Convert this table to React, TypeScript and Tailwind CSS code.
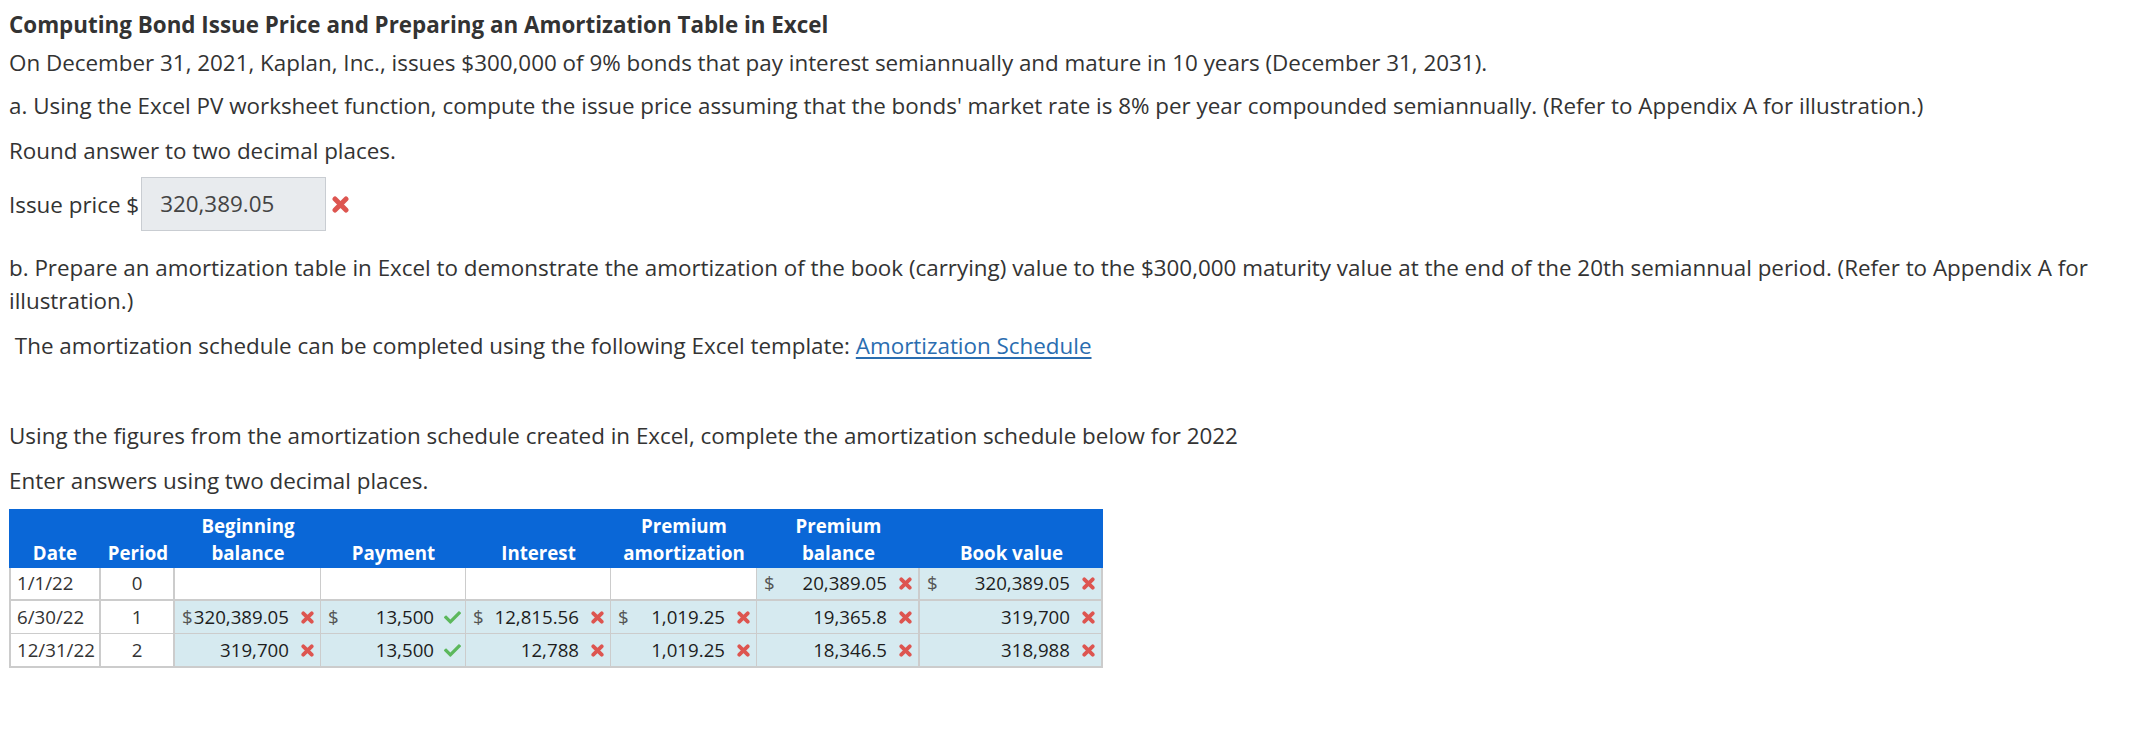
import React from "react";
import { FaCheck } from "react-icons/fa";

type Mark = "x" | "ok";

function XMark({ size = 13, className = "" }: { size?: number; className?: string }) {
  return (
    <svg width={size} height={size} viewBox="0 0 13 13" className={className}>
      <path d="M2.3 2.3 L10.7 10.7 M10.7 2.3 L2.3 10.7" stroke="#dd5550" strokeWidth="3.8" strokeLinecap="round" fill="none" />
    </svg>
  );
}

function Cell({
  dollar,
  value,
  mark,
  border,
}: {
  dollar?: boolean;
  value?: string;
  mark?: Mark;
  border: string;
}) {
  if (!value) {
    return <div className={`h-full bg-white ${border}`} />;
  }
  return (
    <div className={`flex h-full items-center bg-[#d6eaf0] pl-[7px] ${mark === "ok" ? "pr-[4px]" : "pr-[6px]"} ${border}`}>
      <span className="text-[#555]">{dollar ? "$" : ""}</span>
      <span className="flex-1 text-right text-[#1d1d1d]">{value}</span>
      {mark === "x" ? (
        <XMark className="ml-[12px] shrink-0" size={13} />
      ) : (
        <FaCheck className="ml-[10px] shrink-0" size={17} color="#5cb85c" />
      )}
    </div>
  );
}

type RowData = {
  date: string;
  period: string;
  cells: { dollar?: boolean; value?: string; mark?: Mark }[];
};

const rows: RowData[] = [
  {
    date: "1/1/22",
    period: "0",
    cells: [
      {},
      {},
      {},
      {},
      { dollar: true, value: "20,389.05", mark: "x" },
      { dollar: true, value: "320,389.05", mark: "x" },
    ],
  },
  {
    date: "6/30/22",
    period: "1",
    cells: [
      { dollar: true, value: "320,389.05", mark: "x" },
      { dollar: true, value: "13,500", mark: "ok" },
      { dollar: true, value: "12,815.56", mark: "x" },
      { dollar: true, value: "1,019.25", mark: "x" },
      { value: "19,365.8", mark: "x" },
      { value: "319,700", mark: "x" },
    ],
  },
  {
    date: "12/31/22",
    period: "2",
    cells: [
      { value: "319,700", mark: "x" },
      { value: "13,500", mark: "ok" },
      { value: "12,788", mark: "x" },
      { value: "1,019.25", mark: "x" },
      { value: "18,346.5", mark: "x" },
      { value: "318,988", mark: "x" },
    ],
  },
];

export default function App() {
  return (
    <div className="min-h-screen bg-white px-[9px] pt-[10px] font-['Open_Sans',sans-serif] text-[22.4px] text-[#333]">
      <h1 className="text-[22.4px] font-bold leading-[30px] text-[#333]">
        Computing Bond Issue Price and Preparing an Amortization Table in Excel
      </h1>
      <p className="mt-[6px] leading-[33px]">
        On December 31, 2021, Kaplan, Inc., issues $300,000 of 9% bonds that pay interest semiannually and mature in 10 years (December 31, 2031).
      </p>
      <p className="mt-[10px] leading-[33px]">
        a. Using the Excel PV worksheet function, compute the issue price assuming that the bonds' market rate is 8% per year compounded semiannually. (Refer to Appendix A for illustration.)
      </p>
      <p className="mt-[12px] leading-[33px]">Round answer to two decimal places.</p>
      <div className="mt-[10px] flex h-[54px] items-center">
        <span className="leading-[33px]">Issue price $</span>
        <div className="ml-[2px] flex h-[54px] w-[185px] items-center border border-[#c9cdd2] bg-[#e8ebee] pl-[18px] text-[#444]">
          320,389.05
        </div>
        <XMark className="ml-[6px]" size={17} />
      </div>
      <p className="mt-[20px] leading-[33px]">
        b. Prepare an amortization table in Excel to demonstrate the amortization of the book (carrying) value to the $300,000 maturity value at the end of the 20th semiannual period. (Refer to Appendix A for illustration.)
      </p>
      <p className="mt-[12px] leading-[33px]">
        {"\u00a0"}The amortization schedule can be completed using the following Excel template:{" "}
        <a href="#" className="text-[#2a6db0] underline decoration-[1.5px] underline-offset-[3px]">
          Amortization Schedule
        </a>
      </p>
      <p className="mt-[57px] leading-[33px]">
        Using the figures from the amortization schedule created in Excel, complete the amortization schedule below for 2022
      </p>
      <p className="mt-[12px] leading-[33px]">Enter answers using two decimal places.</p>

      <div className="mt-[12px] w-[1094px] text-[18.7px]">
        <div className="grid h-[59px] grid-cols-[92px_74px_146px_145px_145px_146px_163px_183px] items-end bg-[#0a67d7] pb-[2px] text-center font-bold leading-[27px] text-white">
          <div>Date</div>
          <div>Period</div>
          <div>
            Beginning
            <br />
            balance
          </div>
          <div>Payment</div>
          <div>Interest</div>
          <div>
            Premium
            <br />
            amortization
          </div>
          <div>
            Premium
            <br />
            balance
          </div>
          <div>Book value</div>
        </div>
        <div className="border-x-2 border-b-2 border-[#cccccc]">
          {rows.map((r, i) => (
            <div
              key={r.date}
              className={`grid grid-cols-[90px_74px_146px_145px_145px_146px_163px_181px] ${
                i === 0 ? "h-[33px] border-b-2" : i === 1 ? "h-[33px] border-b" : "h-[32px]"
              } border-[#cccccc]`}
            >
              <div className="flex items-center border-r-2 border-[#cccccc] pl-[6px] text-[#333]">{r.date}</div>
              <div className="flex items-center justify-center border-r-2 border-[#cccccc] text-[#333]">{r.period}</div>
              {r.cells.map((c, j) => (
                <Cell
                  key={j}
                  dollar={c.dollar}
                  value={c.value}
                  mark={c.mark}
                  border={j === 5 ? "" : j === 4 ? "border-r-2 border-[#cccccc]" : "border-r border-[#cccccc]"}
                />
              ))}
            </div>
          ))}
        </div>
      </div>
    </div>
  );
}
